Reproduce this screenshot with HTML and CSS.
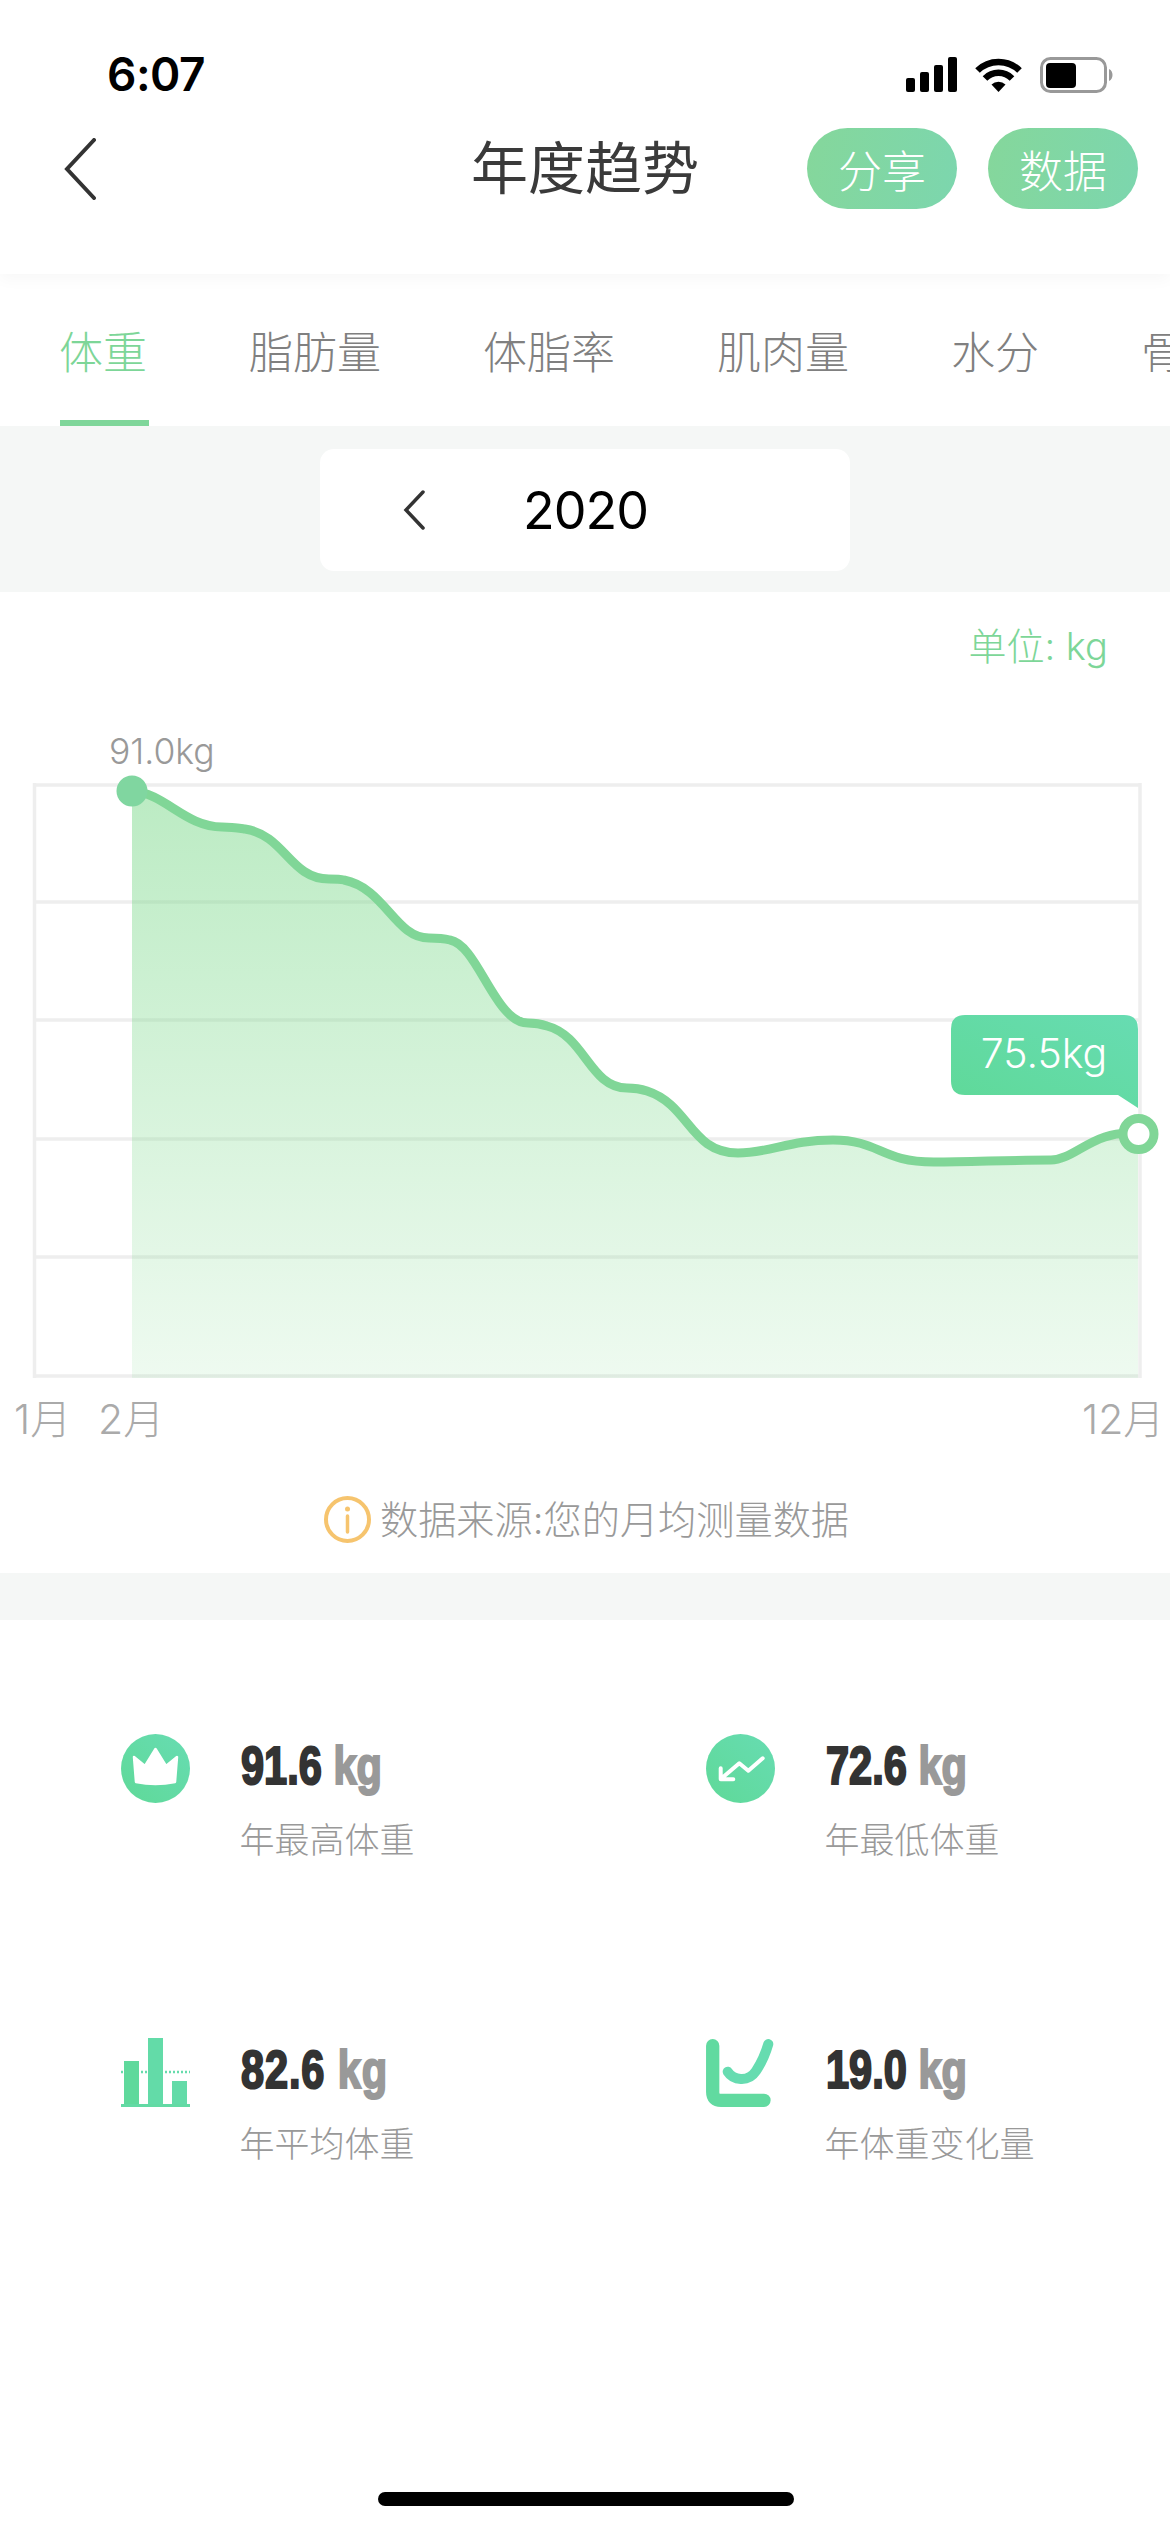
FILE: index.html
```html
<!DOCTYPE html>
<html>
<head>
    <title>年度趋势</title>
    <link rel="stylesheet" href="styles.css">
</head>
<body>
    <div class="header">
        <div class="status">
            <span class="time">6:07</span>
            <div class="status-icons">
                <svg class="signal" width="52" height="35" viewBox="0 0 52 35">
                    <rect x="0" y="21" width="9" height="14" rx="2"/>
                    <rect x="14" y="15" width="9" height="20" rx="2"/>
                    <rect x="28" y="8" width="9" height="27" rx="2"/>
                    <rect x="42" y="0" width="9" height="35" rx="2"/>
                </svg>
                <svg class="wifi" width="49" height="35" viewBox="0 0 49 35">
                    <path d="M3.5 13.5A30 30 0 0 1 45.5 13.5" fill="none" stroke="#000" stroke-width="6.5"/>
                    <path d="M11 21.5A19 19 0 0 1 38 21.5" fill="none" stroke="#000" stroke-width="6.5"/>
                    <path d="M24.5 35L17.5 27.5A10 10 0 0 1 31.5 27.5Z"/>
                </svg>
                <svg class="battery" width="73" height="37" viewBox="0 0 73 37">
                    <rect x="1.5" y="1.5" width="64" height="33" rx="9" fill="none" stroke="#999" stroke-width="3"/>
                    <rect x="6" y="6" width="30" height="25" rx="4"/>
                    <path d="M69 12C71.500 13 72.500 15.500 72.500 18C72.500 20.500 71.500 23 69 24Z" fill="#999"/>
                </svg>
            </div>
        </div>
        <div class="nav">
            <div class="nav-left">
                <svg width="32" height="62" viewBox="0 0 32 62">
                    <path d="M30 2L3 31L30 60" fill="none" stroke="#333" stroke-width="4" stroke-linecap="round"/>
                </svg>
            </div>
            <div class="nav-title">年度趋势</div>
            <div class="nav-right">
                <span class="pill">分享</span>
                <span class="pill">数据</span>
            </div>
        </div>
    </div>

    <div class="tabs">
        <span class="tab active">体重</span>
        <span class="tab">脂肪量</span>
        <span class="tab">体脂率</span>
        <span class="tab">肌肉量</span>
        <span class="tab">水分</span>
        <span class="tab">骨量</span>
    </div>

    <div class="year-band">
        <div class="year-card">
            <svg class="year-prev" width="22" height="40" viewBox="0 0 22 40">
                <path d="M20 2L3 20L20 38" fill="none" stroke="#333" stroke-width="3.500" stroke-linecap="round"/>
            </svg>
            <span class="year">2020</span>
        </div>
    </div>

    <div class="chart-section">
        <div class="unit">单位: kg</div>
        <svg class="chart" width="1170" height="783" viewBox="0 667 1170 783">
            <defs>
                <linearGradient id="areaFill" x1="0" y1="0" x2="0" y2="1">
                    <stop offset="0" stop-color="#7dd98c" stop-opacity="0.52"/>
                    <stop offset="1" stop-color="#7dd98c" stop-opacity="0.13"/>
                </linearGradient>
                <linearGradient id="mint" x1="0" y1="1" x2="1" y2="0">
                    <stop offset="0" stop-color="#5fd998"/>
                    <stop offset="1" stop-color="#67dcb2"/>
                </linearGradient>
            </defs>
            <g class="grid">
                <path d="M33 785H1141M33 902H1141M33 1020H1141M33 1139H1141M33 1257H1141M33 1376H1141M34.500 783V1378M1140 783V1378"/>
            </g>
            <path class="area" d="M132 791C165 793 185 827 222 827C232 827 238 828 245 829C285 835 290 879 329 879C335 879 340 879 344 880C385 888 395 938 429 938C436 938 442 938 450 940C478 945 495 1023 528 1023C536 1023 541 1024 547 1026C585 1036 590 1088 627 1088C634 1088 641 1089 647 1091C690 1105 690 1153 738 1153C770 1153 790 1140 833 1140C880 1140 880 1162 934 1162C970 1162 1010 1160 1051 1160C1075 1160 1095 1128 1138 1134L1138 1378L132 1378Z"/>
            <path class="line" d="M132 791C165 793 185 827 222 827C232 827 238 828 245 829C285 835 290 879 329 879C335 879 340 879 344 880C385 888 395 938 429 938C436 938 442 938 450 940C478 945 495 1023 528 1023C536 1023 541 1024 547 1026C585 1036 590 1088 627 1088C634 1088 641 1089 647 1091C690 1105 690 1153 738 1153C770 1153 790 1140 833 1140C880 1140 880 1162 934 1162C970 1162 1010 1160 1051 1160C1075 1160 1095 1128 1138 1134"/>
            <circle class="start-dot" cx="132" cy="791" r="15.500"/>
            <circle class="end-dot" cx="1138.500" cy="1134" r="15.500"/>
            <path d="M965 1015H1124Q1138 1015 1138 1029V1108L1118 1095H965Q951 1095 951 1081V1029Q951 1015 965 1015Z" fill="url(#mint)"/>
            <text class="tip-text" x="1044" y="1068" text-anchor="middle">75.5kg</text>
            <text class="max-text" x="109" y="764">91.0kg</text>
            <text class="axis-text" x="14" y="1434">1月</text>
            <text class="axis-text" x="98" y="1434">2月</text>
            <text class="axis-text" x="1082" y="1434">12月</text>
        </svg>
        <div class="source">
            <svg width="47" height="47" viewBox="0 0 47 47">
                <circle cx="23.500" cy="23.500" r="21.500" fill="none" stroke="#f6c46e" stroke-width="4"/>
                <circle cx="23.500" cy="13" r="2.500" fill="#f6c46e"/>
                <path d="M23.500 20V36" stroke="#f6c46e" stroke-width="3.500" stroke-linecap="round"/>
            </svg>
            <span class="source-text">数据来源:您的月均测量数据</span>
        </div>
    </div>

    <div class="gap-band"></div>

    <div class="stats">
        <div class="stat">
            <svg class="stat-icon" width="69" height="69" viewBox="0 0 69 69">
                <circle cx="34.500" cy="34.500" r="34.500" fill="url(#mint)"/>
                <path d="M13 23L24 32L34.500 15L45 32L56 23L54 48Q34.500 52 15 48Z" fill="#fff" stroke="#fff" stroke-width="2.500" stroke-linejoin="round"/>
            </svg>
            <div class="stat-text">
                <div class="stat-value">91.6 <span class="stat-unit">kg</span></div>
                <div class="stat-label">年最高体重</div>
            </div>
        </div>
        <div class="stat">
            <svg class="stat-icon" width="69" height="69" viewBox="0 0 69 69">
                <circle cx="34.500" cy="34.500" r="34.500" fill="url(#mint)"/>
                <path d="M56.700 24.300L42.300 36.700L33.300 29.300L15.700 44.300M14.700 34.300V45.300H27.300" fill="none" stroke="#fff" stroke-width="4" stroke-linecap="round" stroke-linejoin="round"/>
            </svg>
            <div class="stat-text">
                <div class="stat-value">72.6 <span class="stat-unit">kg</span></div>
                <div class="stat-label">年最低体重</div>
            </div>
        </div>
        <div class="stat">
            <svg class="stat-icon" width="69" height="69" viewBox="0 0 69 69">
                <path d="M0 34H69" stroke="#66dcac" stroke-width="2.500" stroke-dasharray="2 2"/>
                <rect x="3" y="23" width="15" height="44" fill="#5fd99c"/>
                <rect x="27" y="0" width="15" height="67" fill="#63dba8"/>
                <rect x="51" y="43" width="15" height="24" fill="#63dba8"/>
                <rect x="0" y="66" width="69" height="3" fill="#62daa4"/>
            </svg>
            <div class="stat-text">
                <div class="stat-value wide">82.6 <span class="stat-unit">kg</span></div>
                <div class="stat-label">年平均体重</div>
            </div>
        </div>
        <div class="stat">
            <svg class="stat-icon" width="69" height="69" viewBox="0 0 69 69">
                <path d="M6.700 7.700V54Q6.700 62.300 15 62.300H58" fill="none" stroke="#61daa0" stroke-width="13.300" stroke-linecap="round"/>
                <path d="M21.700 33.700C27 42 42 45 50 33C56 24 60 14 62.300 6" fill="none" stroke="#66dcb0" stroke-width="10" stroke-linecap="round"/>
            </svg>
            <div class="stat-text">
                <div class="stat-value">19.0 <span class="stat-unit">kg</span></div>
                <div class="stat-label">年体重变化量</div>
            </div>
        </div>
    </div>

    <div class="home-row">
        <div class="home-bar"></div>
    </div>
</body>
</html>
```

FILE: styles.css
```css
html, body { margin: 0; padding: 0; }
body {
    width: 1170px;
    height: 2532px;
    overflow: hidden;
    display: flex;
    flex-direction: column;
    background-color: #fff;
    font-family: Inter, "Noto Sans CJK SC", sans-serif;
    color: #333;
}
.header {
    height: 274px;
    box-sizing: border-box;
    background-color: #fff;
    box-shadow: 0 6px 14px rgba(0,0,0,0.03);
    position: relative;
    z-index: 1;
}
.status {
    height: 118px;
    box-sizing: border-box;
    padding: 49px 57px 0 107px;
    display: flex;
    justify-content: space-between;
    align-items: flex-start;
}
.time {
    font-size: 46px;
    line-height: 50px;
    font-weight: 600;
    color: #000;
    letter-spacing: -0.5px;
}
.status-icons {
    display: flex;
    align-items: flex-start;
    margin-top: 8px;
}
.wifi { margin-left: 16px; }
.battery { margin-left: 17px; }
.nav {
    height: 101px;
    display: grid;
    grid-template-columns: 1fr auto 1fr;
    align-items: center;
}
.nav-left { padding-left: 64px; display: flex; }
.nav-title {
    font-size: 57px;
    font-weight: 400;
    color: #3a3a3a;
    line-height: 70px;
}
.nav-right {
    display: flex;
    justify-content: flex-end;
    gap: 31px;
    padding-right: 32px;
}
.pill {
    width: 150px;
    height: 81px;
    border-radius: 41px;
    background: linear-gradient(100deg, #85d79b, #7cd6ae);
    color: #fff;
    font-size: 44px;
    font-weight: 300;
    display: flex;
    align-items: center;
    justify-content: center;
}
.tabs {
    height: 152px;
    display: flex;
    gap: 102px;
    padding-left: 59px;
    overflow: hidden;
    background-color: #fff;
}
.tab {
    font-size: 44px;
    font-weight: 300;
    color: #808080;
    display: flex;
    align-items: center;
    flex-shrink: 0;
    position: relative;
}
.tab.active { color: #7dd698; }
.tab.active::after {
    content: "";
    position: absolute;
    left: 1px;
    right: -2px;
    bottom: 0;
    height: 6px;
    background-color: #7fd69a;
}
.year-band {
    height: 166px;
    box-sizing: border-box;
    padding-top: 23px;
    background-color: #f5f7f6;
}
.year-card {
    width: 530px;
    height: 122px;
    margin-left: 320px;
    box-sizing: border-box;
    padding-left: 83px;
    border-radius: 14px;
    background-color: #fff;
    display: flex;
    align-items: center;
}
.year {
    margin-left: 98px;
    font-size: 52px;
    font-weight: 400;
    color: #000;
    letter-spacing: -1px;
}
.chart-section {
    background-color: #fff;
    padding-top: 33px;
    padding-bottom: 30px;
}
.unit {
    height: 42px;
    line-height: 42px;
    text-align: right;
    padding-right: 62px;
    font-size: 38px;
    font-weight: 300;
    color: #7dd698;
}
.chart { display: block; }
.grid path { fill: none; stroke: #eee; stroke-width: 3.500; }
.area { fill: url(#areaFill); }
.line { fill: none; stroke: #80d697; stroke-width: 9; stroke-linecap: round; }
.start-dot { fill: #80d6a0; }
.end-dot { fill: #fff; stroke: #80d697; stroke-width: 9; }
.tip-text { font-size: 41px; fill: #fff; font-weight: 300; }
.max-text { font-size: 35.500px; fill: #999; font-weight: 300; }
.axis-text { font-size: 41px; fill: #aaa; font-weight: 300; }
.source {
    margin-top: 46px;
    height: 47px;
    display: flex;
    align-items: center;
    justify-content: center;
    gap: 9px;
    padding-left: 3px;
    font-size: 38.200px;
    font-weight: 300;
    color: #999;
}
.source-text { margin-top: -4px; }
.gap-band {
    height: 47px;
    background-color: #f5f7f6;
}
.stats {
    flex: 1;
    display: grid;
    grid-template-columns: 585px 1fr;
    grid-auto-rows: 304px;
    padding: 114px 0 0 121px;
}
.stat {
    display: flex;
    align-items: flex-start;
    gap: 51px;
}
.stat-icon { flex-shrink: 0; }
.stat-text { margin-top: 1px; }
.stat-value {
    font-family: "Liberation Sans", sans-serif;
    font-weight: 700;
    font-size: 54px;
    line-height: 60px;
    color: #333;
    -webkit-text-stroke: 2.2px currentColor;
    transform: scaleX(0.77);
    transform-origin: left center;
    white-space: nowrap;
}
.stat-value.wide { letter-spacing: 1.1px; }
.stat-unit { color: #999; }
.stat-label {
    margin-top: 23px;
    margin-left: -1.5px;
    font-size: 35px;
    line-height: 44px;
    font-weight: 300;
    color: #999;
}
.home-row {
    height: 40px;
    flex-shrink: 0;
}
.home-bar {
    width: 416px;
    height: 14px;
    margin-left: 378px;
    border-radius: 7px;
    background-color: #000;
}
```
